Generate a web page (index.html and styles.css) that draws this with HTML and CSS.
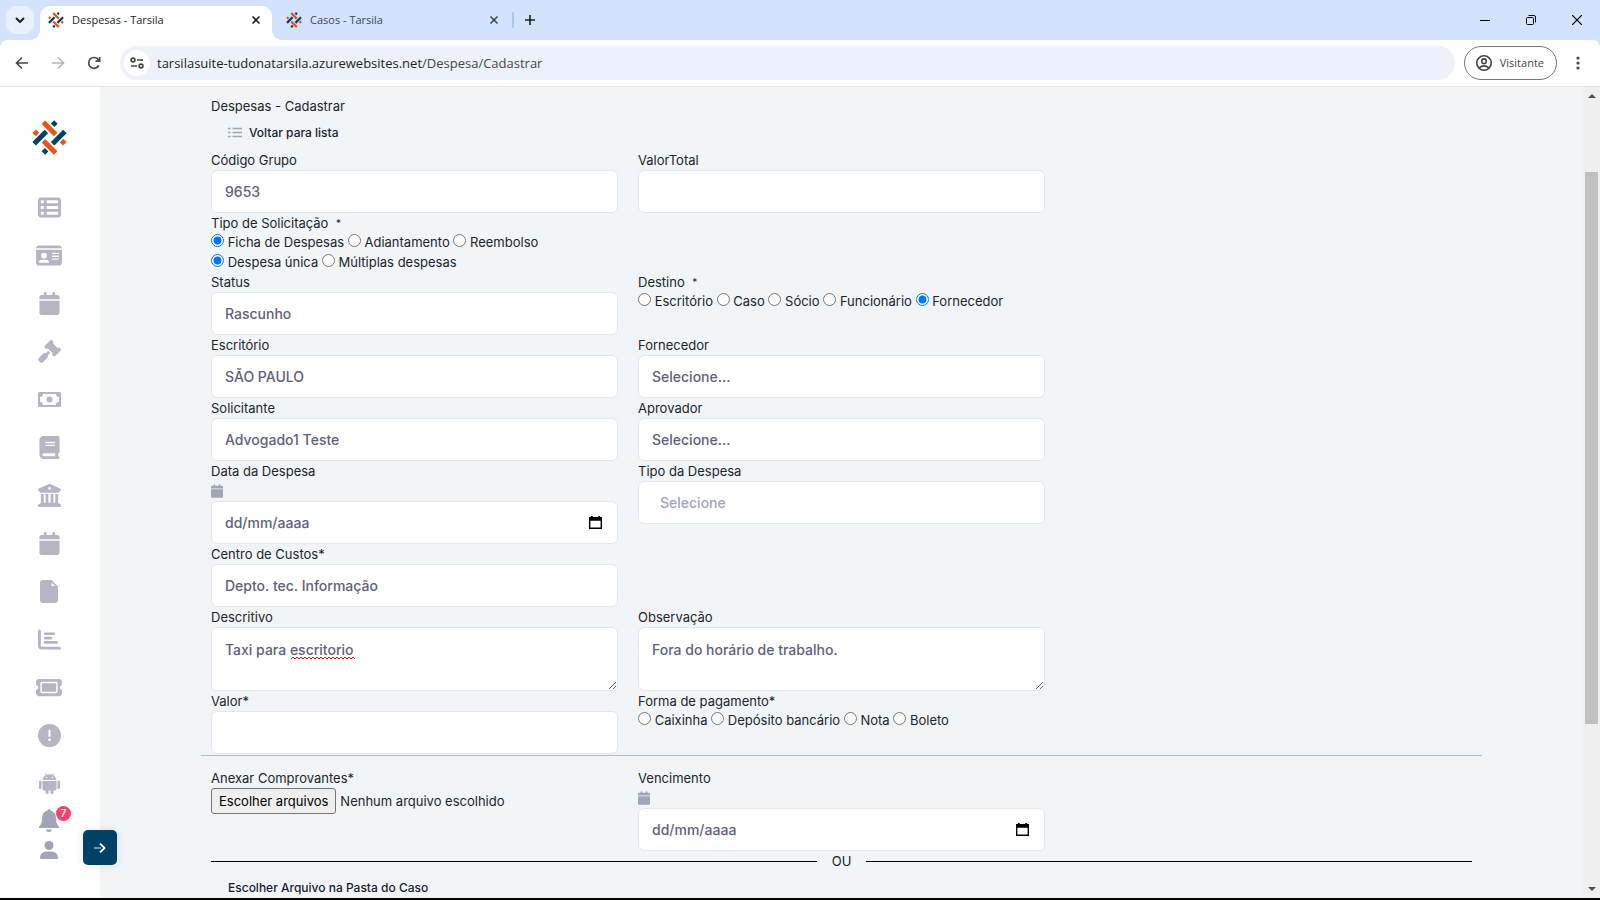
FILE: index.html
```html
<!DOCTYPE html>
<html lang="pt-BR">
<head>
  <meta charset="UTF-8" />
  <meta name="viewport" content="width=device-width, initial-scale=1.0"/>
  <title>Despesas - Tarsila</title>
  <link rel="stylesheet" href="styles.css">
</head>
<body>
  <!-- shared shapes -->
  <svg class="symbols" aria-hidden="true">
    <symbol id="logo" viewBox="96 89 105 106">
      <g fill="none" stroke-width="15">
        <path class="logo-orange" d="M130 96L167 133M130 152L167 189M102 123L112 133M185 151L195 161"/>
        <path class="logo-blue" d="M102 161L139 124M158 161L195 124M158 105L168 95M130 189L140 179"/>
      </g>
    </symbol>
    <symbol id="calendar" viewBox="0 0 448 512">
      <path d="M96 32V64H48C21.500 64 0 85.500 0 112v48H448V112c0-26.500-21.500-48-48-48H352V32c0-17.700-14.300-32-32-32s-32 14.300-32 32V64H160V32c0-17.700-14.300-32-32-32S96 14.300 96 32zM448 192H0V464c0 26.500 21.500 48 48 48H400c26.500 0 48-21.500 48-48V192z"/>
    </symbol>
    <symbol id="picker" viewBox="0 0 14 14">
      <path fill-rule="evenodd" d="M2 0h2v1h6V0h2v1h2v13H0V1h2zM1.500 5v7.500h11V5z"/>
    </symbol>
    <symbol id="close" viewBox="0 0 10 10">
      <path d="M1.500 1.500L8.500 8.500M8.500 1.500L1.500 8.500" fill="none" stroke="currentColor" stroke-width="1.600"/>
    </symbol>
  </svg>

  <header class="browser">
    <div class="tabs">
      <button class="tab-search" aria-label="Pesquisar guias">
        <svg width="10" height="6" viewBox="0 0 10 6"><path d="M1 1L5 5L9 1" fill="none" stroke="currentColor" stroke-width="2"/></svg>
      </button>
      <div class="tab active">
        <svg class="favicon"><use href="#logo"/></svg>
        <span>Despesas - Tarsila</span>
        <button aria-label="Fechar"><svg width="10" height="10"><use href="#close"/></svg></button>
      </div>
      <div class="tab">
        <svg class="favicon"><use href="#logo"/></svg>
        <span>Casos - Tarsila</span>
        <button aria-label="Fechar"><svg width="10" height="10"><use href="#close"/></svg></button>
      </div>
      <button class="new-tab" aria-label="Nova guia">
        <svg width="12" height="12" viewBox="0 0 12 12"><path d="M6 1V11M1 6H11" stroke="currentColor" stroke-width="1.600"/></svg>
      </button>
      <div class="window-buttons">
        <button aria-label="Minimizar"><svg width="10" height="10" viewBox="0 0 10 10"><path d="M0 5.500H10" stroke="currentColor"/></svg></button>
        <button aria-label="Restaurar"><svg width="10" height="10" viewBox="0 0 10 10"><rect x=".5" y="2.500" width="7" height="7" rx="1" fill="none" stroke="currentColor"/><path d="M2.500 .5H8Q9.500 .5 9.500 2V7.500" fill="none" stroke="currentColor"/></svg></button>
        <button aria-label="Fechar janela"><svg width="10" height="10" viewBox="0 0 10 10"><path d="M0 0L10 10M10 0L0 10" stroke="currentColor" stroke-width="1.200"/></svg></button>
      </div>
    </div>

    <div class="toolbar">
      <button class="nav-button" aria-label="Voltar"><svg width="14" height="14" viewBox="0 0 14 14"><path d="M13 7H2M7 1.500L1.500 7L7 12.500" fill="none" stroke="currentColor" stroke-width="1.600"/></svg></button>
      <button class="nav-button disabled" aria-label="Avançar"><svg width="14" height="14" viewBox="0 0 14 14"><path d="M1 7H12M7 1.500L12.500 7L7 12.500" fill="none" stroke="currentColor" stroke-width="1.600"/></svg></button>
      <button class="nav-button" aria-label="Recarregar"><svg width="14" height="14" viewBox="0 0 14 14"><path d="M11.800 9.500A5.400 5.400 0 1 1 11.500 3.800L12.700 5.200M12.700 1V5.200H8.500" fill="none" stroke="currentColor" stroke-width="1.700"/></svg></button>
      <div class="address">
        <button class="site-info" aria-label="Informações do site">
          <svg width="14" height="12" viewBox="0 0 14 12"><g fill="none" stroke="currentColor" stroke-width="1.700"><circle cx="3" cy="3" r="1.900"/><path d="M7 3H13M1 9H7"/><circle cx="11" cy="9" r="1.900"/></g></svg>
        </button>
        <span class="url">tarsilasuite-tudonatarsila.azurewebsites.net<span>/Despesa/Cadastrar</span></span>
      </div>
      <button class="profile">
        <svg width="16" height="16" viewBox="0 0 16 16"><g fill="none" stroke="currentColor" stroke-width="1.600"><circle cx="8" cy="8" r="7.200"/><circle cx="8" cy="6.200" r="2.300"/><path d="M3 13Q8 8.800 13 13"/></g></svg>
        Visitante
      </button>
      <button class="more" aria-label="Menu"><svg width="4" height="14" viewBox="0 0 4 14"><circle cx="2" cy="2" r="1.600"/><circle cx="2" cy="7" r="1.600"/><circle cx="2" cy="12" r="1.600"/></svg></button>
    </div>
  </header>

  <div class="page">
    <aside class="sidebar">
      <a class="brand" href="#" aria-label="Tarsila"><svg width="35" height="35"><use href="#logo"/></svg></a>
      <nav class="menu">
        <a href="#" aria-label="Listas"><svg width="23" height="23" viewBox="0 0 512 512"><path fill-rule="evenodd" d="M0 96C0 60.700 28.700 32 64 32H448c35.300 0 64 28.700 64 64V416c0 35.300-28.700 64-64 64H64c-35.300 0-64-28.700-64-64V96zm64 0v64h64V96H64zm384 0H192v64H448V96zM64 224v64h64V224H64zm384 0H192v64H448V224zM64 352v64h64V352H64zm384 0H192v64H448V352z"/></svg></a>
        <a href="#" aria-label="Pessoas"><svg width="26" height="23" viewBox="0 0 576 512"><path fill-rule="evenodd" d="M0 96l576 0c0-35.300-28.700-64-64-64H64C28.700 32 0 60.700 0 96zm0 32V416c0 35.300 28.700 64 64 64H512c35.300 0 64-28.700 64-64V128H0zM64 405.300c0-29.500 23.900-53.300 53.300-53.300H234.700c29.500 0 53.300 23.900 53.300 53.300c0 5.900-4.800 10.700-10.700 10.700H74.700c-5.900 0-10.700-4.800-10.700-10.700zM176 192a64 64 0 1 1 0 128 64 64 0 1 1 0-128zm176 16c0-8.800 7.200-16 16-16H496c8.800 0 16 7.200 16 16s-7.200 16-16 16H368c-8.800 0-16-7.200-16-16zm0 64c0-8.800 7.200-16 16-16H496c8.800 0 16 7.200 16 16s-7.200 16-16 16H368c-8.800 0-16-7.200-16-16zm0 64c0-8.800 7.200-16 16-16H496c8.800 0 16 7.200 16 16s-7.200 16-16 16H368c-8.800 0-16-7.200-16-16z"/></svg></a>
        <a href="#" aria-label="Agenda"><svg width="21" height="23"><use href="#calendar"/></svg></a>
        <a href="#" aria-label="Processos"><svg width="23" height="23" viewBox="0 0 512 512"><path d="M318.600 9.400c-12.500-12.500-32.800-12.500-45.300 0l-120 120c-12.500 12.500-12.500 32.800 0 45.300l16 16c12.500 12.500 32.800 12.500 45.300 0l4-4L325.400 293.400l-4 4c-12.500 12.500-12.500 32.800 0 45.300l16 16c12.500 12.500 32.800 12.500 45.300 0l120-120c12.500-12.500 12.500-32.800 0-45.300l-16-16c-12.500-12.500-32.800-12.500-45.300 0l-4 4L330.600 74.600l4-4c12.500-12.500 12.500-32.800 0-45.300l-16-16zm-152 288c-12.500-12.500-32.800-12.500-45.300 0l-112 112c-12.500 12.500-12.500 32.800 0 45.300l48 48c12.500 12.500 32.800 12.500 45.300 0l112-112c12.500-12.500 12.500-32.800 0-45.300l-1.400-1.400L272 285.300 226.700 240 168 298.700l-1.400-1.400z"/></svg></a>
        <a href="#" aria-label="Financeiro"><svg width="23" height="15" viewBox="0 0 23 15"><path fill-rule="evenodd" d="M1.500 0H21.500Q23 0 23 1.500V13.500Q23 15 21.500 15H1.500Q0 15 0 13.500V1.500Q0 0 1.500 0zM5 2A3 3 0 0 1 2 5V10A3 3 0 0 1 5 13H18A3 3 0 0 1 21 10V5A3 3 0 0 1 18 2z"/><circle cx="11.500" cy="7.500" r="3"/></svg></a>
        <a href="#" aria-label="Biblioteca"><svg width="21" height="23" viewBox="0 0 448 512"><path fill-rule="evenodd" d="M96 0C43 0 0 43 0 96V416c0 53 43 96 96 96H416c17.700 0 32-14.300 32-32s-14.300-32-32-32V384c17.700 0 32-14.300 32-32V32c0-17.700-14.300-32-32-32H96zm0 384H352v64H96c-17.700 0-32-14.300-32-32s14.300-32 32-32zm32-240c0-8.800 7.200-16 16-16H336c8.800 0 16 7.200 16 16s-7.200 16-16 16H144c-8.800 0-16-7.200-16-16zm16 48H336c8.800 0 16 7.200 16 16s-7.200 16-16 16H144c-8.800 0-16-7.200-16-16s7.200-16 16-16z"/></svg></a>
        <a href="#" aria-label="Tribunais"><svg width="23" height="23" viewBox="0 0 512 512"><path fill-rule="evenodd" d="M243.400 2.600l-224 96c-14 6-21.800 21-18.700 35.800S16.800 160 32 160v8c0 13.300 10.700 24 24 24H456c13.300 0 24-10.700 24-24v-8c15.200 0 28.300-10.700 31.300-25.600s-4.800-29.900-18.700-35.800l-224-96c-8-3.400-17.200-3.400-25.200 0zM128 224H64V420.300c-.6 .3-1.200 .7-1.800 1.100l-48 32c-11.700 7.800-17 22.400-12.900 35.900S17.900 512 32 512H480c14.100 0 26.500-9.200 30.600-22.700s-1.100-28.100-12.900-35.900l-48-32c-.6-.4-1.200-.7-1.800-1.100V224H384V416H344V224H280V416H232V224H168V416H128V224zM256 64a32 32 0 1 1 0 64 32 32 0 1 1 0-64z"/></svg></a>
        <a href="#" aria-label="Prazos"><svg width="21" height="23"><use href="#calendar"/></svg></a>
        <a href="#" aria-label="Documentos"><svg width="18" height="23" viewBox="0 0 18 23"><path fill-rule="evenodd" d="M3 0H11.500L18 6.500V20Q18 23 15 23H3Q0 23 0 20V3Q0 0 3 0zM11.500 2.500V5Q11.500 6 12.500 6H15z"/></svg></a>
        <a href="#" aria-label="Relatórios"><svg width="23" height="23" viewBox="0 0 512 512"><path d="M32 32c17.700 0 32 14.300 32 32V400c0 8.800 7.200 16 16 16H480c17.700 0 32 14.300 32 32s-14.300 32-32 32H80c-44.200 0-80-35.800-80-80V64C0 46.300 14.300 32 32 32z"/><path d="M160 128H352M160 224H288M160 320H416" stroke="currentColor" stroke-width="60" stroke-linecap="round"/></svg></a>
        <a href="#" aria-label="Chamados"><svg width="26" height="23" viewBox="0 0 576 512"><path fill-rule="evenodd" d="M64 64C28.700 64 0 92.700 0 128v64c0 8.800 7.400 15.700 15.700 18.600C34.500 217.100 48 235 48 256s-13.500 38.900-32.300 45.400C7.400 304.300 0 311.200 0 320v64c0 35.300 28.700 64 64 64H512c35.300 0 64-28.700 64-64V320c0-8.800-7.400-15.700-15.700-18.600C541.500 294.900 528 277 528 256s13.500-38.900 32.300-45.400c8.300-2.900 15.700-9.800 15.700-18.600V128c0-35.300-28.700-64-64-64H64zm64 112l0 160c0 8.800 7.200 16 16 16H432c8.800 0 16-7.200 16-16V176c0-8.800-7.200-16-16-16H144c-8.800 0-16 7.200-16 16zM96 160c0-17.700 14.300-32 32-32H448c17.700 0 32 14.300 32 32V352c0 17.700-14.300 32-32 32H128c-17.700 0-32-14.300-32-32V160z"/></svg></a>
        <a href="#" aria-label="Avisos"><svg width="23" height="23" viewBox="0 0 512 512"><path fill-rule="evenodd" d="M256 512A256 256 0 1 0 256 0a256 256 0 1 0 0 512zm0-384c13.300 0 24 10.700 24 24V264c0 13.300-10.700 24-24 24s-24-10.700-24-24V152c0-13.300 10.700-24 24-24zM224 352a32 32 0 1 1 64 0 32 32 0 1 1-64 0z"/></svg></a>
        <a href="#" aria-label="Robôs"><svg width="21" height="21" viewBox="0 0 21 21"><path fill-rule="evenodd" d="M3.500 7Q4 3.500 7 2L5.800 .4L6.400 0L7.700 1.700Q10.500 .7 13.300 1.700L14.600 0L15.200 .4L14 2Q17 3.500 17.500 7zM7.600 3.800a.7 .7 0 1 0 .1 0zM13.300 3.800a.7 .7 0 1 0 .1 0z"/><path d="M3.500 8H17.500V16Q17.500 17.500 16 17.500H14.500V20Q14.500 21 13 21T11.500 20V17.500H9.500V20Q9.500 21 8 21T6.500 20V17.500H5Q3.500 17.500 3.500 16z"/><rect y="7.500" width="2.600" height="8.500" rx="1.300"/><rect x="18.400" y="7.500" width="2.600" height="8.500" rx="1.300"/></svg></a>
      </nav>
      <div class="account">
        <a class="bell" href="#" aria-label="Notificações">
          <svg width="20" height="23" viewBox="0 0 20 23"><path d="M10 0Q11.500 0 11.500 1.500Q17 3 17 9Q17 15 20 18V19H0V18Q3 15 3 9Q3 3 8.500 1.500Q8.500 0 10 0zM6.800 20.500H13.200Q12.500 23 10 23T6.800 20.500z"/></svg>
          <span class="badge">7</span>
        </a>
        <a href="#" aria-label="Perfil"><svg width="18" height="18" viewBox="0 0 18 18"><circle cx="9" cy="4.500" r="4.500"/><path d="M0 17Q0 10.500 7 10.500H11Q18 10.500 18 17Q18 18 17 18H1Q0 18 0 17z"/></svg></a>
      </div>
      <button class="expand" aria-label="Expandir menu"><svg width="12" height="10" viewBox="0 0 12 10"><path d="M0 5H7" stroke="currentColor" stroke-width="1.400" opacity=".6"/><path d="M6 .7L10.500 5L6 9.300" fill="none" stroke="currentColor" stroke-width="1.800"/></svg></button>
    </aside>

    <main class="content">
      <h1>Despesas - Cadastrar</h1>
      <div class="actions">
        <a href="#">
          <svg width="14" height="11" viewBox="0 0 14 11"><path d="M0 1.500H2.500M0 5.500H2.500M0 9.500H2.500M4.500 1.500H14M4.500 5.500H14M4.500 9.500H14" stroke="currentColor" stroke-width="1.700"/></svg>
          <span>Voltar para lista</span>
        </a>
      </div>

      <form>
        <div class="fields">
          <div class="field">
            <label for="codigo">Código Grupo</label>
            <input class="control" type="text" id="codigo" value="9653">
          </div>
          <div class="field">
            <label for="valorTotal">ValorTotal</label>
            <input class="control" type="text" id="valorTotal">
          </div>

          <fieldset class="field first">
            <legend>Tipo de Solicitação <sup>*</sup></legend>
            <div class="radios">
              <input type="radio" name="tipo" id="ficha" checked> <label for="ficha">Ficha de Despesas</label>
              <input type="radio" name="tipo" id="adiantamento"> <label for="adiantamento">Adiantamento</label>
              <input type="radio" name="tipo" id="reembolso"> <label for="reembolso">Reembolso</label>
            </div>
            <div class="radios">
              <input type="radio" name="qtd" id="unica" checked> <label for="unica">Despesa única</label>
              <input type="radio" name="qtd" id="multiplas"> <label for="multiplas">Múltiplas despesas</label>
            </div>
          </fieldset>

          <div class="field first">
            <label for="status">Status</label>
            <select class="control" id="status"><option>Rascunho</option></select>
          </div>
          <fieldset class="field">
            <legend>Destino <sup>*</sup></legend>
            <div class="radios">
              <input type="radio" name="destino" id="dEscritorio"> <label for="dEscritorio">Escritório</label>
              <input type="radio" name="destino" id="dCaso"> <label for="dCaso">Caso</label>
              <input type="radio" name="destino" id="dSocio"> <label for="dSocio">Sócio</label>
              <input type="radio" name="destino" id="dFuncionario"> <label for="dFuncionario">Funcionário</label>
              <input type="radio" name="destino" id="dFornecedor" checked> <label for="dFornecedor">Fornecedor</label>
            </div>
          </fieldset>

          <div class="field first">
            <label for="escritorio">Escritório</label>
            <select class="control" id="escritorio"><option>SÃO PAULO</option></select>
          </div>
          <div class="field">
            <label for="fornecedor">Fornecedor</label>
            <select class="control" id="fornecedor"><option>Selecione...</option></select>
          </div>

          <div class="field first">
            <label for="solicitante">Solicitante</label>
            <select class="control" id="solicitante"><option>Advogado1 Teste</option></select>
          </div>
          <div class="field">
            <label for="aprovador">Aprovador</label>
            <select class="control" id="aprovador"><option>Selecione...</option></select>
          </div>

          <div class="field first">
            <label for="data">Data da Despesa</label>
            <svg class="field-icon"><use href="#calendar"/></svg>
            <div class="date">
              <input class="control" type="text" id="data" placeholder="dd/mm/aaaa">
              <button type="button" aria-label="Abrir calendário"><svg width="13" height="13"><use href="#picker"/></svg></button>
            </div>
          </div>
          <div class="field">
            <label for="tipoDespesa">Tipo da Despesa</label>
            <input class="control search" type="text" id="tipoDespesa" placeholder="Selecione">
          </div>

          <div class="field first">
            <label for="centro">Centro de Custos*</label>
            <select class="control" id="centro"><option>Depto. tec. Informação</option></select>
          </div>

          <div class="field first">
            <label for="descritivo">Descritivo</label>
            <div class="spelling">
              <textarea class="control" id="descritivo">Taxi para escritorio</textarea>
              <svg class="squiggle" width="64" height="4"><defs><pattern id="wave" width="4" height="4" patternUnits="userSpaceOnUse"><path d="M0 3L2 1L4 3" fill="none" stroke="#f00"/></pattern></defs><rect width="64" height="4" fill="url(#wave)"/></svg>
            </div>
          </div>
          <div class="field">
            <label for="observacao">Observação</label>
            <textarea class="control" id="observacao">Fora do horário de trabalho.</textarea>
          </div>

          <div class="field first">
            <label for="valor">Valor*</label>
            <input class="control" type="text" id="valor">
          </div>
          <fieldset class="field">
            <legend>Forma de pagamento*</legend>
            <div class="radios">
              <input type="radio" name="pagamento" id="caixinha"> <label for="caixinha">Caixinha</label>
              <input type="radio" name="pagamento" id="deposito"> <label for="deposito">Depósito bancário</label>
              <input type="radio" name="pagamento" id="nota"> <label for="nota">Nota</label>
              <input type="radio" name="pagamento" id="boleto"> <label for="boleto">Boleto</label>
            </div>
          </fieldset>
        </div>

        <hr>

        <div class="fields">
          <div class="field">
            <label for="anexos">Anexar Comprovantes*</label>
            <div class="file">
              <button type="button" id="anexos">Escolher arquivos</button>
              <span>Nenhum arquivo escolhido</span>
            </div>
          </div>
          <div class="field">
            <label for="vencimento">Vencimento</label>
            <svg class="field-icon"><use href="#calendar"/></svg>
            <div class="date">
              <input class="control" type="text" id="vencimento" placeholder="dd/mm/aaaa">
              <button type="button" aria-label="Abrir calendário"><svg width="13" height="13"><use href="#picker"/></svg></button>
            </div>
          </div>
        </div>

        <div class="divider">OU</div>
        <div class="actions">
          <a href="#">Escolher Arquivo na Pasta do Caso</a>
        </div>
      </form>
    </main>

    <div class="scrollbar">
      <svg width="8" height="4" viewBox="0 0 8 4"><path d="M0 4L4 0L8 4z"/></svg>
      <div class="track"><div class="thumb"></div></div>
      <svg width="8" height="4" viewBox="0 0 8 4"><path d="M0 0L4 4L8 0z"/></svg>
    </div>
  </div>
</body>
</html>
```

FILE: styles.css
```css
:root {
  --bg: #f1f5f8;
  --text: #212529;
  --input-text: #5e6278;
  --muted: #a1a5b7;
  --icon: #b5b5c3;
  --border: #e4e6ef;
  --blue: #004266;
  --orange: #ea5414;
  --chrome: #d3e3fd;
}

* {
  box-sizing: border-box;
}

body {
  margin: 0;
  height: 100vh;
  display: flex;
  flex-direction: column;
  overflow: hidden;
  background: var(--bg);
  border-bottom: 2px solid #000;
  color: var(--text);
  font-family: Inter, sans-serif;
  font-size: 13px;
  line-height: 20px;
}

a {
  color: inherit;
  text-decoration: none;
}

button {
  font: inherit;
  color: inherit;
  border: none;
  padding: 0;
  background: none;
  cursor: pointer;
}

svg {
  display: block;
  fill: currentColor;
}

.symbols {
  position: absolute;
  width: 0;
  height: 0;
}

.logo-orange {
  stroke: var(--orange);
}

.logo-blue {
  stroke: var(--blue);
}

/* browser window */
.browser {
  background: var(--chrome);
  color: #1f1f1f;
  font-family: "Open Sans", sans-serif;
  font-size: 11px;
}

.tabs {
  display: flex;
  align-items: center;
  height: 40px;
  padding-left: 6px;
}

.tab-search {
  width: 28px;
  height: 28px;
  margin-right: 6px;
  border-radius: 10px;
  background: #e9f1fe;
  display: grid;
  place-items: center;
}

.tab {
  position: relative;
  width: 240px;
  height: 34px;
  margin-top: 6px;
  padding: 0 13px 6px 14px;
  display: flex;
  align-items: center;
  gap: 8px;
  color: #474747;
}

.tab.active {
  width: 232px;
  padding-left: 8px;
  padding-right: 11px;
  background: #fff;
  border-radius: 10px 10px 0 0;
  color: #1f1f1f;
}

.tab.active::before,
.tab.active::after {
  content: "";
  position: absolute;
  bottom: 0;
  width: 10px;
  height: 10px;
}

.tab.active::before {
  left: -10px;
  background: radial-gradient(circle at 0 0, transparent 10px, #fff 10px);
}

.tab.active::after {
  right: -10px;
  background: radial-gradient(circle at 100% 0, transparent 10px, #fff 10px);
}

.tab span {
  flex: 1;
}

.favicon {
  width: 16px;
  height: 16px;
}

.new-tab {
  height: 16px;
  padding-left: 10px;
  border-left: 2px solid #a8c7fa;
  display: flex;
  align-items: center;
}

.window-buttons {
  margin-left: auto;
  display: flex;
}

.window-buttons button {
  width: 46px;
  height: 40px;
  display: grid;
  place-items: center;
  color: #000;
}

.toolbar {
  display: flex;
  align-items: center;
  height: 47px;
  padding: 0 12px 1px 4px;
  background: #fff;
  border-bottom: 1px solid #dfe1e3;
  border-radius: 8px 8px 0 0;
  color: #474747;
}

.nav-button {
  width: 36px;
  height: 36px;
  display: grid;
  place-items: center;
}

.nav-button.disabled {
  color: #b5b5b5;
}

.address {
  flex: 1;
  height: 34px;
  margin-left: 8px;
  padding-left: 4px;
  border-radius: 17px;
  background: #edf1fa;
  display: flex;
  align-items: center;
  gap: 7px;
}

.site-info {
  width: 26px;
  height: 26px;
  border-radius: 50%;
  background: #fff;
  display: grid;
  place-items: center;
}

.url {
  color: #1f1f1f;
  font-size: 13px;
}

.url span {
  color: #474747;
}

.profile {
  height: 34px;
  margin: 0 19px 0 9px;
  padding: 0 12px 0 11px;
  border: 1px solid #747775;
  border-radius: 17px;
  display: flex;
  align-items: center;
  gap: 8px;
}

.more {
  width: 4px;
  margin-right: 8px;
}

/* app */
.page {
  flex: 1;
  min-height: 0;
  display: flex;
}

.sidebar {
  position: relative;
  width: 100px;
  flex-shrink: 0;
  padding-right: 2px;
  background: #fff;
  color: var(--icon);
  display: flex;
  flex-direction: column;
  align-items: center;
}

.brand {
  padding: 33px 0 28px;
}

.menu a {
  height: 48px;
  display: grid;
  place-items: center;
}

.account {
  margin-top: -2px;
  color: var(--muted);
}

.account a {
  position: relative;
  height: 30px;
  display: grid;
  place-items: center;
}

.badge {
  position: absolute;
  top: 1px;
  left: 17px;
  width: 15px;
  height: 15px;
  border-radius: 50%;
  background: #f1416c;
  color: #fff;
  font-size: 10px;
  font-weight: 600;
  line-height: 15px;
  text-align: center;
}

.expand {
  position: absolute;
  right: -17px;
  bottom: 33px;
  width: 34px;
  height: 35px;
  border-radius: 5px;
  background: var(--blue);
  box-shadow: 0 0 10px rgba(0, 0, 0, 0.1);
  color: #fff;
  display: grid;
  place-items: center;
}

.content {
  flex: 1;
  min-width: 0;
  overflow: hidden;
  padding: 9px 111px 0;
}

h1 {
  margin: 0;
  font-size: 13px;
  font-weight: 400;
}

.actions {
  height: 33px;
  margin-bottom: 1px;
  padding-left: 17px;
  display: flex;
  align-items: center;
  color: #181c32;
}

.actions a {
  display: flex;
  align-items: center;
  gap: 7px;
  font-size: 12px;
  font-weight: 500;
}

.actions svg {
  color: var(--muted);
}

.fields {
  display: grid;
  grid-template-columns: repeat(3, 1fr);
  column-gap: 20px;
}

.field {
  min-width: 0;
  margin: 0;
  padding: 0;
  border: none;
}

.field.first {
  grid-column-start: 1;
}

.field > label,
legend {
  display: block;
  height: 20px;
  padding: 0;
}

legend sup {
  margin-left: 4px;
  font-size: 10px;
  line-height: 10px;
  vertical-align: 1px;
}

.control {
  display: block;
  width: 100%;
  height: 43px;
  padding: 0 13px;
  border: 1px solid var(--border);
  border-radius: 6px;
  background: #fff;
  color: var(--input-text);
  font-family: inherit;
  font-size: 14px;
  font-weight: 500;
  line-height: 21px;
  appearance: none;
  outline: none;
}

.control::placeholder {
  color: var(--input-text);
}

.control.search {
  padding-left: 21px;
}

.control.search::placeholder {
  color: var(--muted);
}

textarea.control {
  height: 64px;
  padding-top: 11px;
}

.radios {
  height: 19px;
  line-height: 19px;
}

.radios + .radios {
  margin-top: 1px;
}

.radios input {
  margin: 0;
}

.field-icon {
  width: 12px;
  height: 20px;
  padding: 3px 0;
  color: var(--muted);
}

.date,
.spelling {
  position: relative;
}

.date button {
  position: absolute;
  top: 15px;
  right: 16px;
  color: #000;
}

.squiggle {
  position: absolute;
  top: 29px;
  left: 80px;
}

hr {
  height: 1px;
  margin: 1px -10px 12px;
  border: none;
  background: #b9bec3;
}

.file {
  display: flex;
  align-items: center;
  gap: 4px;
}

.file button {
  height: 26px;
  padding: 0 7px;
  border: 1px solid #767676;
  border-radius: 3px;
  background: #efefef;
  color: #000;
}

.divider {
  display: flex;
  align-items: center;
  gap: 15px;
}

.divider::before,
.divider::after {
  content: "";
  flex: 1;
  height: 1px;
  background: #000;
}

.scrollbar {
  width: 17px;
  padding: 7px 2px;
  background: #f0f0f0;
  color: #505050;
  display: flex;
  flex-direction: column;
  align-items: center;
}

.track {
  flex: 1;
  width: 13px;
  padding: 74px 0 163px;
}

.thumb {
  height: 100%;
  background: #c1c1c1;
}
```
